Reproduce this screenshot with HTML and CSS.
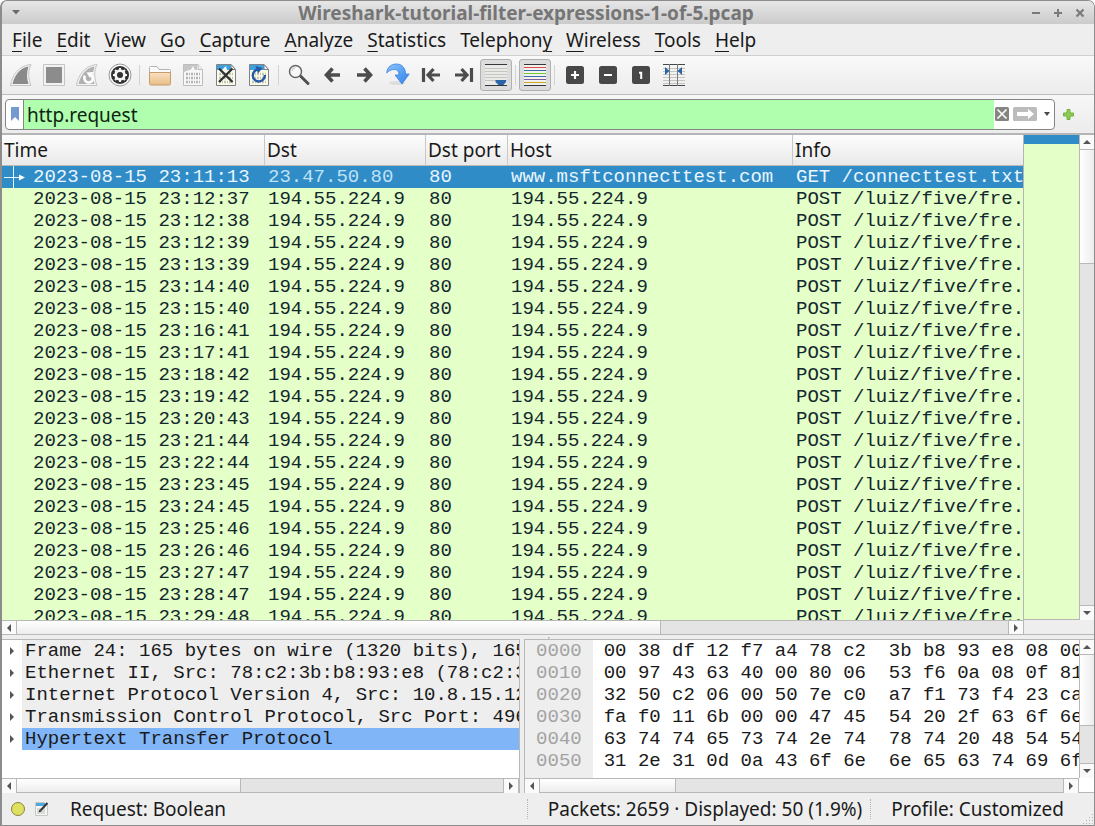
FILE: index.html
```
<!DOCTYPE html>
<html lang="en">

<head>
    <meta charset="utf-8">
    <title>Wireshark-tutorial-filter-expressions-1-of-5.pcap</title>
    <link rel="stylesheet" href="styles.css">
</head>

<body>
    <div class="window">
        <header class="titlebar">
            <button class="title-btn" aria-label="Window menu"><svg width="8" height="5" viewBox="0 0 8 5"><path d="M0 0h8L4 4.500z" fill="#6b6b6b"/></svg></button>
            <h1>Wireshark-tutorial-filter-expressions-1-of-5.pcap</h1>
            <button class="title-btn" aria-label="Minimize"><svg width="10" height="10" viewBox="0 0 10 10"><path d="M1 5h8" stroke="#7a7a7a" stroke-width="2"/></svg></button>
            <button class="title-btn" aria-label="Maximize"><svg width="10" height="10" viewBox="0 0 10 10"><path d="M1 5h8M5 1v8" stroke="#7a7a7a" stroke-width="2"/></svg></button>
            <button class="title-btn" aria-label="Close"><svg width="10" height="10" viewBox="0 0 10 10"><path d="M1.500 1.500l7 7M8.500 1.500l-7 7" stroke="#7a7a7a" stroke-width="2.200"/></svg></button>
        </header>

        <nav class="menubar">
            <button><u>F</u>ile</button>
            <button><u>E</u>dit</button>
            <button><u>V</u>iew</button>
            <button><u>G</u>o</button>
            <button><u>C</u>apture</button>
            <button><u>A</u>nalyze</button>
            <button><u>S</u>tatistics</button>
            <button>Telephon<u>y</u></button>
            <button><u>W</u>ireless</button>
            <button><u>T</u>ools</button>
            <button><u>H</u>elp</button>
        </nav>

        <div class="toolbar">
            <button aria-label="Start capture">
                <svg viewBox="0 0 24 24"><path d="M1.500 22.500C3 12 10 2.500 22 1.500c-3 6-3 14 0 21z" fill="#f4f4f4" stroke="#c4c4c4"/><path d="M3.500 21C5.500 12 11 5 19.500 3.500c-2 6-2 12 0 17.500z" fill="#8a8a8a"/></svg>
            </button>
            <button aria-label="Stop capture">
                <svg viewBox="0 0 24 24"><path d="M1.500 1.500h21v21h-21z" fill="#f2f2f2" stroke="#c4c4c4"/><path d="M4 4h16v16H4z" fill="#8c8c8c"/></svg>
            </button>
            <button aria-label="Restart capture">
                <svg viewBox="0 0 24 24"><path d="M1.500 22.500C3 12 10 2.500 22 1.500c-3 6-3 14 0 21z" fill="#f4f4f4" stroke="#c4c4c4"/><path d="M3.500 21C5.500 12 11 5 19.500 3.500c-2 6-2 12 0 17.500z" fill="#b0b0b0"/><path d="M9.500 12.500c-.8 4.500 1.500 7 4 7 4.500 0 5.500-4.500 3-7.500" fill="none" stroke="#fff" stroke-width="2.600"/><path d="M11.500 9.500l7.500-.5-4 6z" fill="#fff"/></svg>
            </button>
            <button aria-label="Capture options">
                <svg viewBox="0 0 24 24"><circle cx="12" cy="12" r="11" fill="#f4f4f4" stroke="#999"/><circle cx="12" cy="12" r="9" fill="#303030"/><circle cx="12" cy="12" r="4.500" fill="none" stroke="#f4f4f4" stroke-width="2.600"/><path d="M12 5v14M5 12h14M7 7l10 10M17 7L7 17" stroke="#f4f4f4" stroke-width="2"/><circle cx="12" cy="12" r="3" fill="#303030"/></svg>
            </button>
            <span class="sep"></span>
            <button aria-label="Open file">
                <svg viewBox="0 0 24 24"><path d="M1.500 20V4.500q0-1 1-1H9l2 3h10.500q1 0 1 1V20z" fill="#fbfbfb" stroke="#b5b2ad"/><path d="M1.500 9.500h21v11q0 1.500-1.500 1.500H3q-1.500 0-1.500-1.500z" fill="url(#folder)" stroke="#c49b6a"/><defs><linearGradient id="folder" x2="0" y2="1"><stop stop-color="#fae0c0"/><stop offset="1" stop-color="#e9bd85"/></linearGradient></defs></svg>
            </button>
            <button aria-label="Save file">
                <svg viewBox="0 0 24 24"><path d="M2.500 1.500H17l4.500 5v16h-19z" fill="#f7f7f7" stroke="#bdbdbd"/><path d="M3 2h13v5H8L3 9z" fill="#c6c6c6"/><path d="M9 8l3-5 2 4z" fill="#f7f7f7"/><path d="M17 1.500v5h4.500" fill="#eee" stroke="#bdbdbd"/><path d="M5 11h14M5 15h14M5 19h14" stroke="#b4b4b4" stroke-width="2.500" stroke-dasharray="2 1 1 1"/></svg>
            </button>
            <button aria-label="Close file">
                <svg viewBox="0 0 24 24"><path d="M2.500 1.500H17l4.500 5v16h-19z" fill="#fbfbe9" stroke="#7b8288"/><path d="M3 2h14l4 5H3z" fill="#3fa0dc"/><path d="M8 7l4-4 1 4z" fill="#fff"/><path d="M17 1.500v5h4.500z" fill="#f5f5f5" stroke="#7b8288"/><path d="M5 11h14M5 15h14M5 19h14" stroke="#c5c5b5" stroke-width="2.500" stroke-dasharray="2 1 1 1"/><path d="M5 5.500l13.500 13.500M18.500 5.500L5 19" stroke="#2f3336" stroke-width="2.400"/></svg>
            </button>
            <button aria-label="Reload file">
                <svg viewBox="0 0 24 24"><path d="M2.500 1.500H17l4.500 5v16h-19z" fill="#fbfbe9" stroke="#7b8288"/><path d="M3 2h14l4 5H3z" fill="#3fa0dc"/><path d="M17 1.500v5h4.500z" fill="#f5f5f5" stroke="#7b8288"/><path d="M5 11h14M5 15h14M5 19h14" stroke="#c5c5b5" stroke-width="2.500" stroke-dasharray="2 1 1 1"/><path d="M11 6.500a6 6 0 1 0 6.800 5.500" fill="none" stroke="#2458a6" stroke-width="2.400"/><path d="M8.500 3l7 2-4.500 5.500z" fill="#2458a6"/></svg>
            </button>
            <span class="sep"></span>
            <button aria-label="Find packet">
                <svg viewBox="0 0 24 24"><path d="M13.500 13l7.500 7.500" stroke="#505050" stroke-width="3" stroke-linecap="round"/><circle cx="8.500" cy="8.500" r="6" fill="#f8f8f8" stroke="#666" stroke-width="1.500"/><path d="M5 8a4 4 0 0 1 3.500-3.500" fill="none" stroke="#bbb"/></svg>
            </button>
            <button aria-label="Previous packet">
                <svg viewBox="0 0 24 24"><path d="M20 12H8M12.500 5.500L6.500 12l6 6.500" fill="none" stroke="#4c4c4c" stroke-width="3.600"/></svg>
            </button>
            <button aria-label="Next packet">
                <svg viewBox="0 0 24 24"><path d="M4 12h12M11.500 5.500l6 6.500-6 6.500" fill="none" stroke="#4c4c4c" stroke-width="3.600"/></svg>
            </button>
            <button aria-label="Go to packet">
                <svg viewBox="0 0 24 24"><ellipse cx="11" cy="20" rx="8" ry="2" fill="#ddd"/><path d="M.8 10C1 3.500 6 1 10.500 1c6 0 9 4.500 9 10h3.700l-7.200 10-7-9h4c0-3.500-1.500-5.500-4.500-5.500C5.500 6.500 3 7.500.8 10z" fill="url(#jump)" stroke="#3c82dc" stroke-width=".8"/><defs><linearGradient id="jump" x2="1" y2="1"><stop stop-color="#8cc4fc"/><stop offset="1" stop-color="#2f82ee"/></linearGradient></defs></svg>
            </button>
            <button aria-label="First packet">
                <svg viewBox="0 0 24 24"><path d="M4.500 5v14M21 12H10M14.500 6L9 12l5.500 6" fill="none" stroke="#4c4c4c" stroke-width="3.200"/></svg>
            </button>
            <button aria-label="Last packet">
                <svg viewBox="0 0 24 24"><path d="M19.500 5v14M3 12h11M9.500 6L15 12l-5.500 6" fill="none" stroke="#4c4c4c" stroke-width="3.200"/></svg>
            </button>
            <button class="checked" aria-label="Auto scroll" aria-pressed="true">
                <svg viewBox="0 0 24 24"><path d="M1 2h22v20H1z" fill="#e9e9e7"/><path d="M1 5.500h22M1 8.500h22M1 11.500h22M1 14.500h22M1 17.500h22" stroke="#c6c6c0"/><path d="M1 1.500h22M1 22.500h22" stroke="#33373a"/><path d="M11.500 17H22v2l-2.500 3h-5l-3-3z" fill="#2c64a8"/></svg>
            </button>
            <span class="sep"></span>
            <button class="checked" aria-label="Colorize packets" aria-pressed="true">
                <svg viewBox="0 0 24 24"><path d="M1 2h22v20H1z" fill="#f1f1ef"/><path d="M1 1.500h22M1 22.500h22" stroke="#33373a"/><path d="M1 4.500h22" stroke="#dd4a48"/><path d="M1 7.500h22" stroke="#3d6aa8"/><path d="M1 10.500h22" stroke="#6fcc2c"/><path d="M1 13.500h22" stroke="#3d6aa8"/><path d="M1 16.500h22" stroke="#80609a"/><path d="M1 19.500h22" stroke="#cfa420"/></svg>
            </button>
            <span class="sep"></span>
            <button aria-label="Zoom in">
                <svg viewBox="0 0 24 24"><rect x="3" y="3" width="18" height="18" rx="2.500" fill="#484848"/><path d="M12 8v8M8 12h8" stroke="#fff" stroke-width="2.200"/></svg>
            </button>
            <button aria-label="Zoom out">
                <svg viewBox="0 0 24 24"><rect x="3" y="3" width="18" height="18" rx="2.500" fill="#484848"/><path d="M8 12h8" stroke="#fff" stroke-width="2.200"/></svg>
            </button>
            <button aria-label="Normal size">
                <svg viewBox="0 0 24 24"><rect x="3" y="3" width="18" height="18" rx="2.500" fill="#484848"/><path d="M10 9.800h2.200V16" fill="none" stroke="#fff" stroke-width="2"/></svg>
            </button>
            <button aria-label="Resize columns">
                <svg viewBox="0 0 24 24"><path d="M1 5.500h22M1 8.500h22M1 11.500h22M1 14.500h22M1 17.500h22M1 20.500h22" stroke="#c5c5c0"/><path d="M1 1.500h22M1 22.500h22" stroke="#44484a"/><path d="M7.500 1v22M15.500 1v22" stroke="#777b7d"/><path d="M3 4l4.500 4L3 12zM20 4l-4.500 4 4.500 4z" fill="#2c64a8"/></svg>
            </button>
        </div>

        <form class="filterbar">
            <div class="filter">
                <button type="button" class="bookmark" aria-label="Saved filters"><svg width="8" height="14" viewBox="0 0 8 14"><path d="M0 0h8v14l-4-4-4 4z" fill="#739bcf"/></svg></button>
                <input type="text" aria-label="Display filter" value="http.request" spellcheck="false">
                <button type="button" class="filter-btn" aria-label="Clear filter"><svg width="14" height="14" viewBox="0 0 14 14"><rect width="14" height="14" rx="1.500" fill="#858681"/><path d="M2.500 2.500l9 9M11.500 2.500l-9 9" stroke="#fff" stroke-width="1.600"/></svg></button>
                <button type="submit" class="filter-btn" aria-label="Apply filter"><svg width="24" height="14" viewBox="0 0 24 14"><rect width="24" height="14" rx="1.500" fill="#bcbcbc"/><path d="M4 5h11V2l6 5-6 5V9H4z" fill="#fff"/></svg></button>
                <button type="button" class="filter-btn recent" aria-label="Recent filters"><svg width="6" height="4" viewBox="0 0 6 4"><path d="M0 0h6L3 4z" fill="#4a4a4a"/></svg></button>
            </div>
            <button type="button" class="add-filter" aria-label="Add filter button"><svg width="11" height="11" viewBox="0 0 11 11"><path d="M4 .5h3V4h3.500v3H7v3.500H4V7H.5V4H4z" fill="#8ccb55" stroke="#70b43a"/></svg></button>
        </form>

        <main class="packets">
            <div class="packet-list">
                <table>
                    <colgroup>
                        <col class="col-time">
                        <col class="col-dst">
                        <col class="col-port">
                        <col class="col-host">
                        <col>
                    </colgroup>
                    <thead>
                        <tr><th>Time</th><th>Dst</th><th>Dst port</th><th>Host</th><th>Info</th></tr>
                    </thead>
                    <tbody id="rows">
                        <tr class="selected">
                            <td><span class="mark"><svg width="24" height="22" viewBox="0 0 24 22"><path d="M11.500 0v22M2 11.500h16" stroke="#e4f6ff" fill="none"/><path d="M17 8.500l6 3-6 3z" fill="#fff"/></svg></span>2023-08-15 23:11:13</td>
                            <td class="current">23.47.50.80</td>
                            <td>80</td>
                            <td>www.msftconnecttest.com</td>
                            <td>GET /connecttest.txt</td>
                        </tr>
                    </tbody>
                </table>
            </div>
            <div class="minimap"></div>
            <div class="vscroll">
                <button aria-label="Scroll up"><i class="arrow up"></i></button>
                <div class="track"><div class="thumb list-v"></div></div>
                <button aria-label="Scroll down"><i class="arrow down"></i></button>
            </div>
            <div class="hscroll">
                <button aria-label="Scroll left"><i class="arrow left"></i></button>
                <div class="track"><div class="thumb list-h"></div></div>
                <button aria-label="Scroll right"><i class="arrow right"></i></button>
            </div>
        </main>

        <div class="splitter"></div>

        <div class="panes">
            <section class="details">
                <ul class="tree">
                    <li><button aria-label="Expand"><i class="arrow right"></i></button><span>Frame 24: 165 bytes on wire (1320 bits), 165</span></li>
                    <li><button aria-label="Expand"><i class="arrow right"></i></button><span>Ethernet II, Src: 78:c2:3b:b8:93:e8 (78:c2:3</span></li>
                    <li><button aria-label="Expand"><i class="arrow right"></i></button><span>Internet Protocol Version 4, Src: 10.8.15.12</span></li>
                    <li><button aria-label="Expand"><i class="arrow right"></i></button><span>Transmission Control Protocol, Src Port: 496</span></li>
                    <li class="active"><button aria-label="Expand"><i class="arrow right"></i></button><span>Hypertext Transfer Protocol</span></li>
                </ul>
                <div class="hscroll">
                    <button aria-label="Scroll left"><i class="arrow left"></i></button>
                    <div class="track"><div class="thumb details-h"></div></div>
                    <button aria-label="Scroll right"><i class="arrow right"></i></button>
                </div>
            </section>

            <section class="bytes">
                <div class="hex">
                    <pre class="offsets">0000
0010
0020
0030
0040
0050</pre>
                    <pre class="data">00 38 df 12 f7 a4 78 c2  3b b8 93 e8 08 00
00 97 43 63 40 00 80 06  53 f6 0a 08 0f 81
32 50 c2 06 00 50 7e c0  a7 f1 73 f4 23 ca
fa f0 11 6b 00 00 47 45  54 20 2f 63 6f 6e
63 74 74 65 73 74 2e 74  78 74 20 48 54 54
31 2e 31 0d 0a 43 6f 6e  6e 65 63 74 69 6f</pre>
                </div>
                <div class="vscroll">
                    <button aria-label="Scroll up"><i class="arrow up"></i></button>
                    <div class="track"><div class="thumb bytes-v"></div></div>
                    <button aria-label="Scroll down"><i class="arrow down"></i></button>
                </div>
                <div class="hscroll">
                    <button aria-label="Scroll left"><i class="arrow left"></i></button>
                    <div class="track"><div class="thumb bytes-h"></div></div>
                    <button aria-label="Scroll right"><i class="arrow right"></i></button>
                </div>
            </section>
        </div>

        <footer class="statusbar">
            <button class="expert" aria-label="Expert information"></button>
            <button class="comment" aria-label="Capture file comments"><svg width="16" height="16" viewBox="0 0 16 16"><path d="M1.500 1.500h9l3 3v10h-12z" fill="#f5f5f2" stroke="#c5c9cc"/><path d="M2 2h9l1 3H2z" fill="#4fa9dc"/><path d="M3 8h8M3 10h8M3 12h8" stroke="#c2c2bb"/><path d="M13.500 2l-7 7.500" stroke="#33373a" stroke-width="2"/><path d="M5.500 8.500l2 2-3 1z" fill="#33373a"/></svg></button>
            <span class="field">Request: Boolean</span>
            <span class="counts">Packets: 2659 · Displayed: 50 (1.9%)</span>
            <button class="profile">Profile: Customized</button>
            <svg class="grip" width="12" height="12" viewBox="0 0 12 12"><path d="M10.500 1v11M7.500 4v8M4.500 7v5M1.500 10v2" stroke="#b5b5b5" stroke-dasharray="1 2"/></svg>
        </footer>
    </div>

    <script>
        const times = [
            '23:12:37', '23:12:38', '23:12:39', '23:13:39', '23:14:40',
            '23:15:40', '23:16:41', '23:17:41', '23:18:42', '23:19:42',
            '23:20:43', '23:21:44', '23:22:44', '23:23:45', '23:24:45',
            '23:25:46', '23:26:46', '23:27:47', '23:28:47', '23:29:48'
        ];

        let rows = document.getElementById('rows');
        for(let time of times) {
            let tr = rows.insertRow();
            tr.insertCell().innerHTML = `<span class="mark"></span>2023-08-15 ${time}`;
            for(let text of ['194.55.224.9', '80', '194.55.224.9', 'POST /luiz/five/fre.']) {
                tr.insertCell().textContent = text;
            }
        }
    </script>
</body>

</html>
```

FILE: styles.css
```
* {
    box-sizing: border-box;
}

body {
    margin: 0;
    background: white;
    color: #1a1a1a;
    font-family: "Noto Sans", sans-serif;
    font-size: 19px;
}

button {
    margin: 0;
    padding: 0;
    border: 0;
    background: none;
    color: inherit;
    font: inherit;
}

svg {
    display: block;
}

.window {
    display: flex;
    flex-direction: column;
    height: 100vh;
    border: 1px solid #8c8c8c;
    border-left-width: 2px;
    border-radius: 7px 7px 0 0;
    background: #eee;
    overflow: hidden;
}

/* title bar */

.titlebar {
    display: flex;
    align-items: center;
    height: 23px;
    padding: 0 3px;
    background: linear-gradient(#e6e6e6, #cbcbcb);
}

.titlebar h1 {
    flex: 1;
    margin: 0;
    color: #757575;
    font-size: 19px;
    font-weight: bold;
    line-height: 24px;
    text-align: center;
}

.title-btn {
    display: grid;
    place-items: center;
    width: 22px;
    height: 22px;
}

/* menu */

.menubar {
    display: flex;
    height: 32px;
    padding: 0 3px;
    border-bottom: 1px solid #d0d0d0;
}

.menubar button {
    padding: 0 7px;
    line-height: 33px;
}

.menubar u {
    text-decoration-thickness: 1px;
    text-underline-offset: 4px;
}

/* toolbar */

.toolbar {
    display: flex;
    align-items: center;
    height: 39px;
    padding: 0 2px;
    border-bottom: 1px solid #bdbdbd;
    background: linear-gradient(#f9f9f9, #ececec);
}

.toolbar button {
    display: grid;
    place-items: center;
    width: 31px;
    height: 31px;
    margin: 0 1px;
}

.toolbar svg {
    width: 24px;
    height: 24px;
}

.toolbar .checked {
    width: 32px;
    height: 32px;
    margin: 0;
    border: 1px solid #b0b0b0;
    border-radius: 3px;
    background: #dcdcdc;
}

.sep {
    width: 1px;
    height: 20px;
    margin: 0 3px;
    background: #d2d2d2;
}

/* filter */

.filterbar {
    display: flex;
    align-items: center;
    height: 40px;
    padding: 0 20px 0 3px;
    border-bottom: 2px solid #b5b5b5;
    background: linear-gradient(#f7f7f7, #ececec);
}

.filter {
    display: flex;
    flex: 1;
    height: 31px;
    border: 1px solid #858585;
    border-radius: 4px;
    background: white;
    overflow: hidden;
}

.bookmark {
    display: grid;
    place-items: center;
    width: 18px;
    border-right: 1px solid #858585;
}

.filter input {
    flex: 1;
    min-width: 0;
    padding: 2px 3px 0;
    border: 0;
    background: #afffaf;
    color: #10250f;
    font: inherit;
    outline: 0;
}

.filter-btn {
    display: grid;
    place-items: center;
    padding: 0 1px;
}

.filter-btn + .filter-btn {
    padding-left: 3px;
}

.filter .recent {
    width: 16px;
}

.add-filter {
    padding-left: 8px;
}

/* packet list */

.packets {
    display: grid;
    flex: 1;
    grid-template-columns: 1fr 55px 15px;
    grid-template-rows: 1fr 14px;
    min-height: 0;
}

.packet-list {
    min-height: 0;
    border-right: 1px solid #b5b5b5;
    background: #e4ffc7;
    overflow: hidden;
}

.packet-list table {
    width: 100%;
    table-layout: fixed;
    border-spacing: 0;
}

.col-time {
    width: 263px;
}

.col-dst {
    width: 161px;
}

.col-port {
    width: 82px;
}

.col-host {
    width: 285px;
}

.packet-list th {
    height: 31px;
    padding: 0 2px;
    border-right: 1px solid #c8c8c8;
    border-bottom: 1px solid #b8b8b8;
    background: linear-gradient(#fdfdfd, #e9e9e9);
    font-weight: normal;
    line-height: 30px;
    text-align: left;
    white-space: nowrap;
}

.packet-list th:last-child {
    border-right: 0;
}

.packet-list td,
.tree,
.hex {
    font-family: "Liberation Mono", monospace;
    font-size: 19px;
    line-height: 22px;
}

.packet-list td {
    height: 22px;
    padding: 0 0 0 3px;
    color: #12272e;
    overflow: hidden;
    white-space: nowrap;
}

.packet-list td:first-child {
    padding-left: 0;
}

.mark {
    display: inline-block;
    width: 31px;
    height: 22px;
    vertical-align: top;
}

.packet-list .selected td {
    background: #308cc6;
    color: #e9f6ff;
}

.packet-list .selected .current {
    color: #bfe2f6;
}

.minimap {
    border-bottom: 1px solid #b5b5b5;
    background: linear-gradient(#308cc6 9px, #e4ffc7 9px);
}

/* scroll bars */

.vscroll,
.hscroll {
    display: flex;
    background: #e4e4e4;
}

.vscroll {
    flex-direction: column;
    width: 15px;
    border-left: 1px solid #b8b8b8;
}

.hscroll {
    height: 14px;
    border-top: 1px solid #b8b8b8;
    border-right: 1px solid #b8b8b8;
}

.vscroll button,
.hscroll button {
    display: grid;
    flex: none;
    place-items: center;
    width: 14px;
    height: 14px;
    background: #fafafa;
}

.track {
    flex: 1;
    border: 0 solid #b8b8b8;
}

.vscroll .track {
    border-width: 1px 0;
}

.hscroll .track {
    border-width: 0 1px;
}

.thumb {
    border: 0 solid #b8b8b8;
}

.vscroll .thumb {
    border-bottom-width: 1px;
    background: linear-gradient(to right, #fff, #ededed);
}

.hscroll .thumb {
    height: 100%;
    border-right-width: 1px;
    background: linear-gradient(#fff, #ededed);
}

.list-v {
    height: 25%;
}

.list-h {
    width: 65%;
}

.details-h {
    width: 46%;
}

.bytes-v {
    height: 66%;
}

.bytes-h {
    width: 26%;
}

.arrow {
    width: 0;
    height: 0;
    border: 4px solid transparent;
}

.arrow.up {
    border-top: 0;
    border-bottom-color: #555;
}

.arrow.down {
    border-bottom: 0;
    border-top-color: #555;
}

.arrow.left {
    border-left: 0;
    border-right-color: #555;
}

.arrow.right {
    border-right: 0;
    border-left-color: #555;
}

.splitter {
    height: 5px;
    border-top: 1px solid #b8b8b8;
    background: radial-gradient(circle, #bbb 1px, transparent 1px) center / 3px 3px no-repeat;
}

/* lower panes */

.panes {
    display: grid;
    flex: none;
    grid-template-columns: minmax(0, 10fr) minmax(0, 11fr);
    gap: 4px;
}

.details,
.bytes {
    border: 1px solid #b8b8b8;
    border-left-width: 0;
    background: white;
}

.details {
    display: flex;
    flex-direction: column;
}

.tree {
    flex: 1;
    margin: 0;
    padding: 0;
    list-style: none;
}

.tree li {
    display: flex;
    height: 22px;
}

.tree button {
    display: grid;
    place-items: center;
    width: 20px;
}

.tree span {
    flex: 1;
    padding-left: 3px;
    background: #eee;
    overflow: hidden;
    white-space: nowrap;
}

.tree .active span {
    background: #80b5f7;
}

.bytes {
    display: grid;
    grid-template-columns: minmax(0, 1fr) 15px;
    border-left-width: 1px;
    border-right-width: 0;
}

.hex {
    display: flex;
    overflow: hidden;
}

.hex pre {
    margin: 0;
    padding: 0 11px 6px;
    font: inherit;
}

.offsets {
    background: #eee;
    color: #a3a3a3;
}

/* status bar */

.statusbar {
    display: flex;
    align-items: center;
    height: 32px;
    padding-left: 9px;
}

.expert {
    width: 14px;
    height: 14px;
    border: 1px solid #85853a;
    border-radius: 50%;
    background: #dfdf62;
}

.comment {
    margin: 0 20px 0 9px;
}

.field {
    flex: 1;
}

.counts,
.profile {
    padding: 0 8px 0 20px;
    border-left: 1px dotted #b5b5b5;
    line-height: 20px;
    white-space: nowrap;
}

.profile {
    padding-right: 18px;
}

.grip {
    align-self: flex-end;
}
```
